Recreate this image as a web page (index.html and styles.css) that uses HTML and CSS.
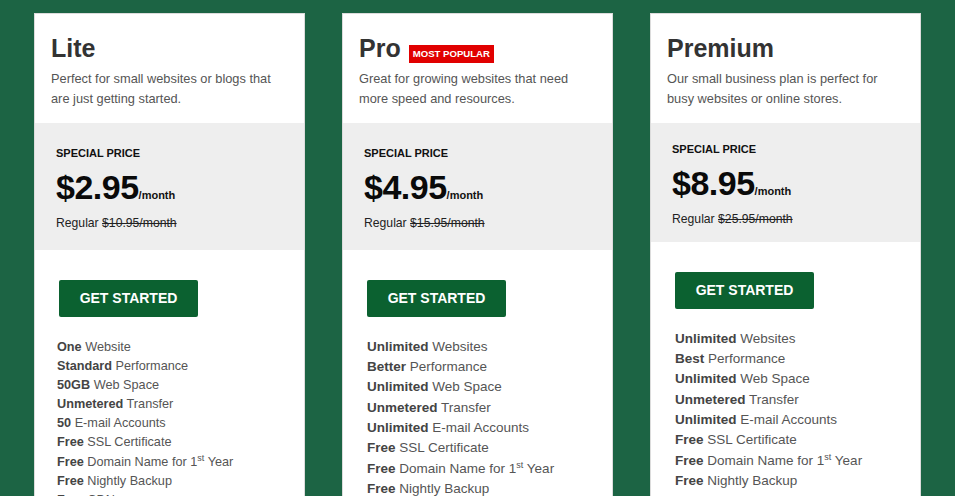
FILE: index.html
```html
<!DOCTYPE html>
<html lang="en">
<head>
<meta charset="utf-8">
<title>Hosting Plans</title>
<link rel="stylesheet" href="styles.css">
</head>
<body>
<div class="plans">
  <div class="card">
    <div class="head">
      <h2 class="title">Lite</h2>
      <p class="desc">Perfect for small websites or blogs that are just getting started.</p>
    </div>
    <div class="price-box">
      <div class="special">SPECIAL PRICE</div>
      <div class="price">$2.95<span class="per">/month</span></div>
      <div class="regular">Regular <s>$10.95/month</s></div>
    </div>
    <div class="body">
      <a class="btn" href="#">GET STARTED</a>
      <ul class="features small">
        <li><b>One</b> Website</li>
        <li><b>Standard</b> Performance</li>
        <li><b>50GB</b> Web Space</li>
        <li><b>Unmetered</b> Transfer</li>
        <li><b>50</b> E-mail Accounts</li>
        <li><b>Free</b> SSL Certificate</li>
        <li class="sup-line"><b>Free</b> Domain Name for 1<sup>st</sup> Year</li>
        <li><b>Free</b> Nightly Backup</li>
        <li><b>Free</b> CDN</li>
      </ul>
    </div>
  </div>
  <div class="card">
    <div class="head">
      <h2 class="title">Pro <span class="badge">MOST POPULAR</span></h2>
      <p class="desc">Great for growing websites that need more speed and resources.</p>
    </div>
    <div class="price-box">
      <div class="special">SPECIAL PRICE</div>
      <div class="price">$4.95<span class="per">/month</span></div>
      <div class="regular">Regular <s>$15.95/month</s></div>
    </div>
    <div class="body">
      <a class="btn" href="#">GET STARTED</a>
      <ul class="features">
        <li><b>Unlimited</b> Websites</li>
        <li><b>Better</b> Performance</li>
        <li><b>Unlimited</b> Web Space</li>
        <li><b>Unmetered</b> Transfer</li>
        <li><b>Unlimited</b> E-mail Accounts</li>
        <li><b>Free</b> SSL Certificate</li>
        <li class="sup-line"><b>Free</b> Domain Name for 1<sup>st</sup> Year</li>
        <li><b>Free</b> Nightly Backup</li>
        <li><b>Free</b> CDN</li>
      </ul>
    </div>
  </div>
  <div class="card">
    <div class="head">
      <h2 class="title">Premium</h2>
      <p class="desc">Our small business plan is perfect for busy websites or online stores.</p>
    </div>
    <div class="price-box compact">
      <div class="special">SPECIAL PRICE</div>
      <div class="price">$8.95<span class="per">/month</span></div>
      <div class="regular">Regular <s>$25.95/month</s></div>
    </div>
    <div class="body">
      <a class="btn" href="#">GET STARTED</a>
      <ul class="features">
        <li><b>Unlimited</b> Websites</li>
        <li><b>Best</b> Performance</li>
        <li><b>Unlimited</b> Web Space</li>
        <li><b>Unmetered</b> Transfer</li>
        <li><b>Unlimited</b> E-mail Accounts</li>
        <li><b>Free</b> SSL Certificate</li>
        <li class="sup-line"><b>Free</b> Domain Name for 1<sup>st</sup> Year</li>
        <li><b>Free</b> Nightly Backup</li>
        <li><b>Free</b> CDN</li>
      </ul>
    </div>
  </div>
</div>
</body>
</html>
```

FILE: styles.css
```css
html, body {
  margin: 0;
  padding: 0;
}
body {
  background: #1c6444;
  font-family: "Liberation Sans", Arial, sans-serif;
  color: #555;
}
.plans {
  display: flex;
  gap: 37px;
  padding: 13px 34px 0;
}
.card {
  flex: 1;
  background: #fff;
  border: 1px solid #dcdcdc;
  box-sizing: border-box;
  min-width: 0;
  padding-bottom: 40px;
}
.head {
  padding: 19px 16px 14px;
}
.title {
  margin: 0 0 6px;
  font-size: 25px;
  line-height: 30px;
  font-weight: bold;
  color: #333;
  display: flex;
  align-items: flex-end;
  gap: 8px;
}
.badge {
  background: #e10000;
  color: #fff;
  font-size: 9.6px;
  line-height: 18px;
  height: 18px;
  padding: 0 4px;
  font-weight: bold;
}
.desc {
  margin: 0;
  font-size: 12.8px;
  line-height: 20px;
  color: #555;
}
.price-box {
  background: #eeeeee;
  padding: 23px 21px 19px;
  color: #111;
}
.price-box.compact {
  padding-top: 19px;
  padding-bottom: 15px;
}
.special {
  font-size: 11px;
  line-height: 14px;
  font-weight: bold;
  color: #111;
}
.price {
  margin-top: 7px;
  font-size: 34px;
  line-height: 40px;
  font-weight: bold;
  letter-spacing: -0.5px;
  color: #0a0a0a;
}
.per {
  font-size: 11px;
  line-height: 0;
  letter-spacing: 0;
  color: #111;
}
.regular {
  margin-top: 8px;
  font-size: 12.2px;
  line-height: 16px;
  color: #222;
}
.regular s {
  color: #222;
}
.body {
  padding: 30px 24px 0;
}
.btn {
  display: inline-block;
  width: 139px;
  height: 37px;
  line-height: 37px;
  text-align: center;
  background: #0b6130;
  color: #fff;
  font-size: 14px;
  font-weight: bold;
  text-decoration: none;
  border-radius: 2px;
  vertical-align: top;
}
.features {
  list-style: none;
  margin: 20px 0 0;
  padding: 0;
  font-size: 13.5px;
  line-height: 20.2px;
  color: #555;
}
.features.small {
  font-size: 12.7px;
  line-height: 19px;
  margin-top: 21px;
  margin-left: -2px;
}
.features .sup-line {
  padding-top: 1px;
}
.features b {
  color: #444;
}
.features sup {
  font-size: 9px;
  line-height: 0;
}
```
